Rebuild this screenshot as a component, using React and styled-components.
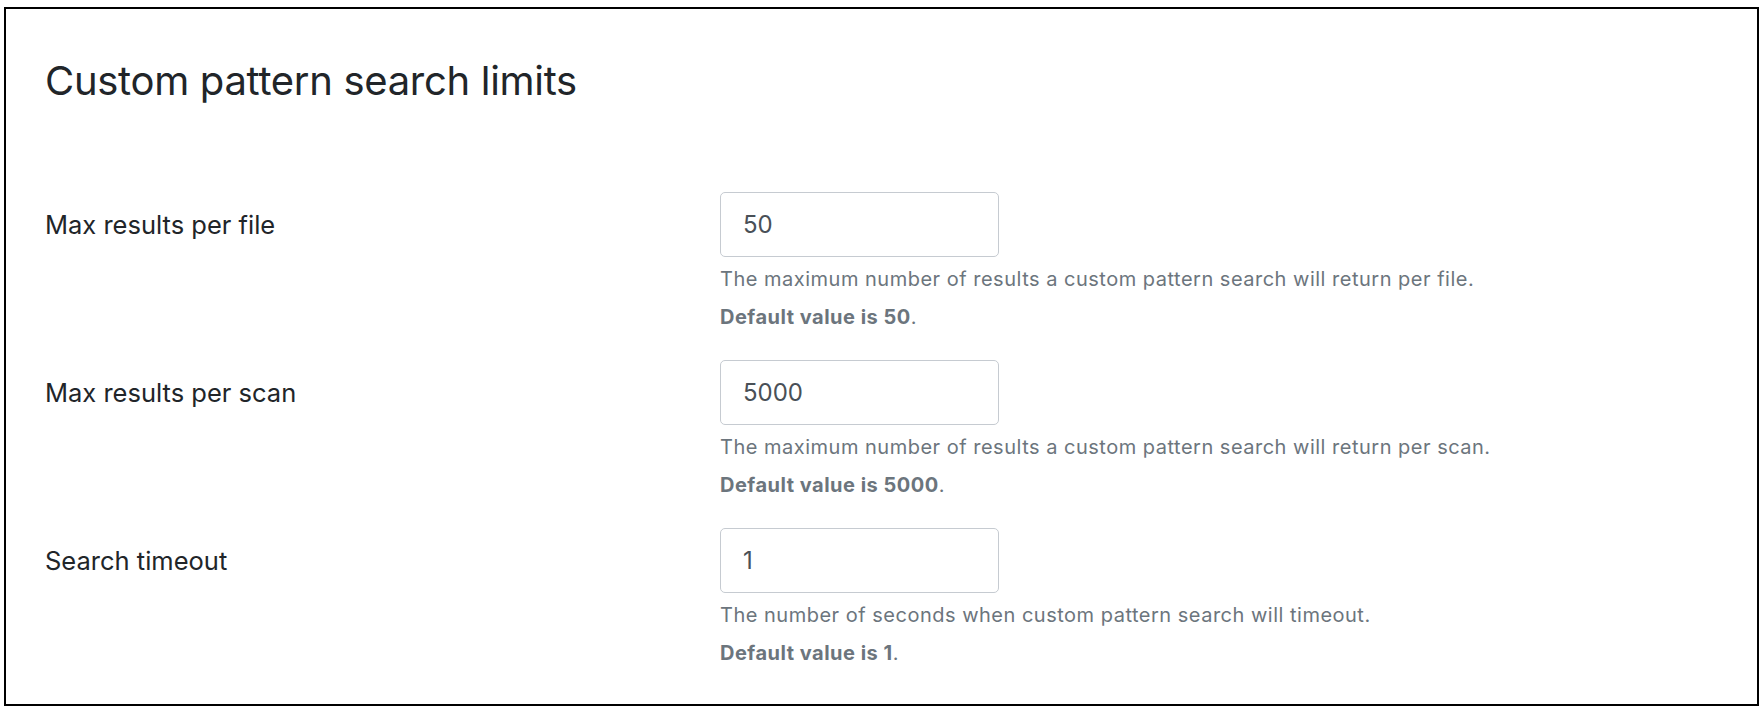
import React from "react";
import styled, { createGlobalStyle } from "styled-components";

const GlobalStyle = createGlobalStyle`
  html, body {
    margin: 0;
    padding: 0;
    background: #ffffff;
  }
  body {
    font-family: Inter, "Noto Sans", "Liberation Sans", sans-serif;
    color: #212529;
  }
  * {
    box-sizing: border-box;
  }
`;

const limits = [
  {
    id: "per-file",
    label: "Max results per file",
    value: "50",
    help: "The maximum number of results a custom pattern search will return per file.",
    fallback: "50",
  },
  {
    id: "per-scan",
    label: "Max results per scan",
    value: "5000",
    help: "The maximum number of results a custom pattern search will return per scan.",
    fallback: "5000",
  },
  {
    id: "timeout",
    label: "Search timeout",
    value: "1",
    help: "The number of seconds when custom pattern search will timeout.",
    fallback: "1",
  },
];

const App = () => {
  return (
    <>
      <GlobalStyle />
      <Page>
        <Card>
          <Title>Custom pattern search limits</Title>
          <Fields>
            {limits.map((item) => (
              <Row key={item.id}>
                <Label htmlFor={item.id}>{item.label}</Label>
                <Control>
                  <Input id={item.id} type="text" defaultValue={item.value} />
                  <Help>{item.help}</Help>
                  <Help $gap={9}>
                    <strong>Default value is {item.fallback}</strong>.
                  </Help>
                </Control>
              </Row>
            ))}
          </Fields>
        </Card>
      </Page>
    </>
  );
};

const Page = styled.div`
  padding: 7px 5px 4px 4px;
`;

const Card = styled.section`
  border: 2px solid #000000;
  min-height: 699px;
  padding: 48px 39px 30px 39px;
`;

const Title = styled.h2`
  margin: 0;
  font-size: 40px;
  font-weight: 400;
  line-height: 48px;
  letter-spacing: -0.3px;
  color: #212529;
`;

const Fields = styled.div`
  display: flex;
  flex-direction: column;
  gap: 29px;
  margin-top: 87px;
`;

const Row = styled.div`
  display: grid;
  grid-template-columns: 675px 1fr;
  align-items: start;
`;

const Label = styled.label`
  font-size: 25.5px;
  line-height: 65px;
  color: #212529;
`;

const Control = styled.div`
  display: flex;
  flex-direction: column;
  align-items: flex-start;
`;

const Input = styled.input`
  width: 279px;
  height: 65px;
  padding: 0 22px;
  border: 1px solid #c6cbd1;
  border-radius: 5px;
  font-family: inherit;
  font-size: 24px;
  color: #495057;
  background: #ffffff;
  outline: none;
`;

const Help = styled.p`
  margin: ${({ $gap }) => $gap || 8}px 0 0 0;
  font-size: 20px;
  line-height: 28.5px;
  letter-spacing: 0.5px;
  color: #6c757d;

  strong {
    font-weight: 700;
  }
`;

export default App;
